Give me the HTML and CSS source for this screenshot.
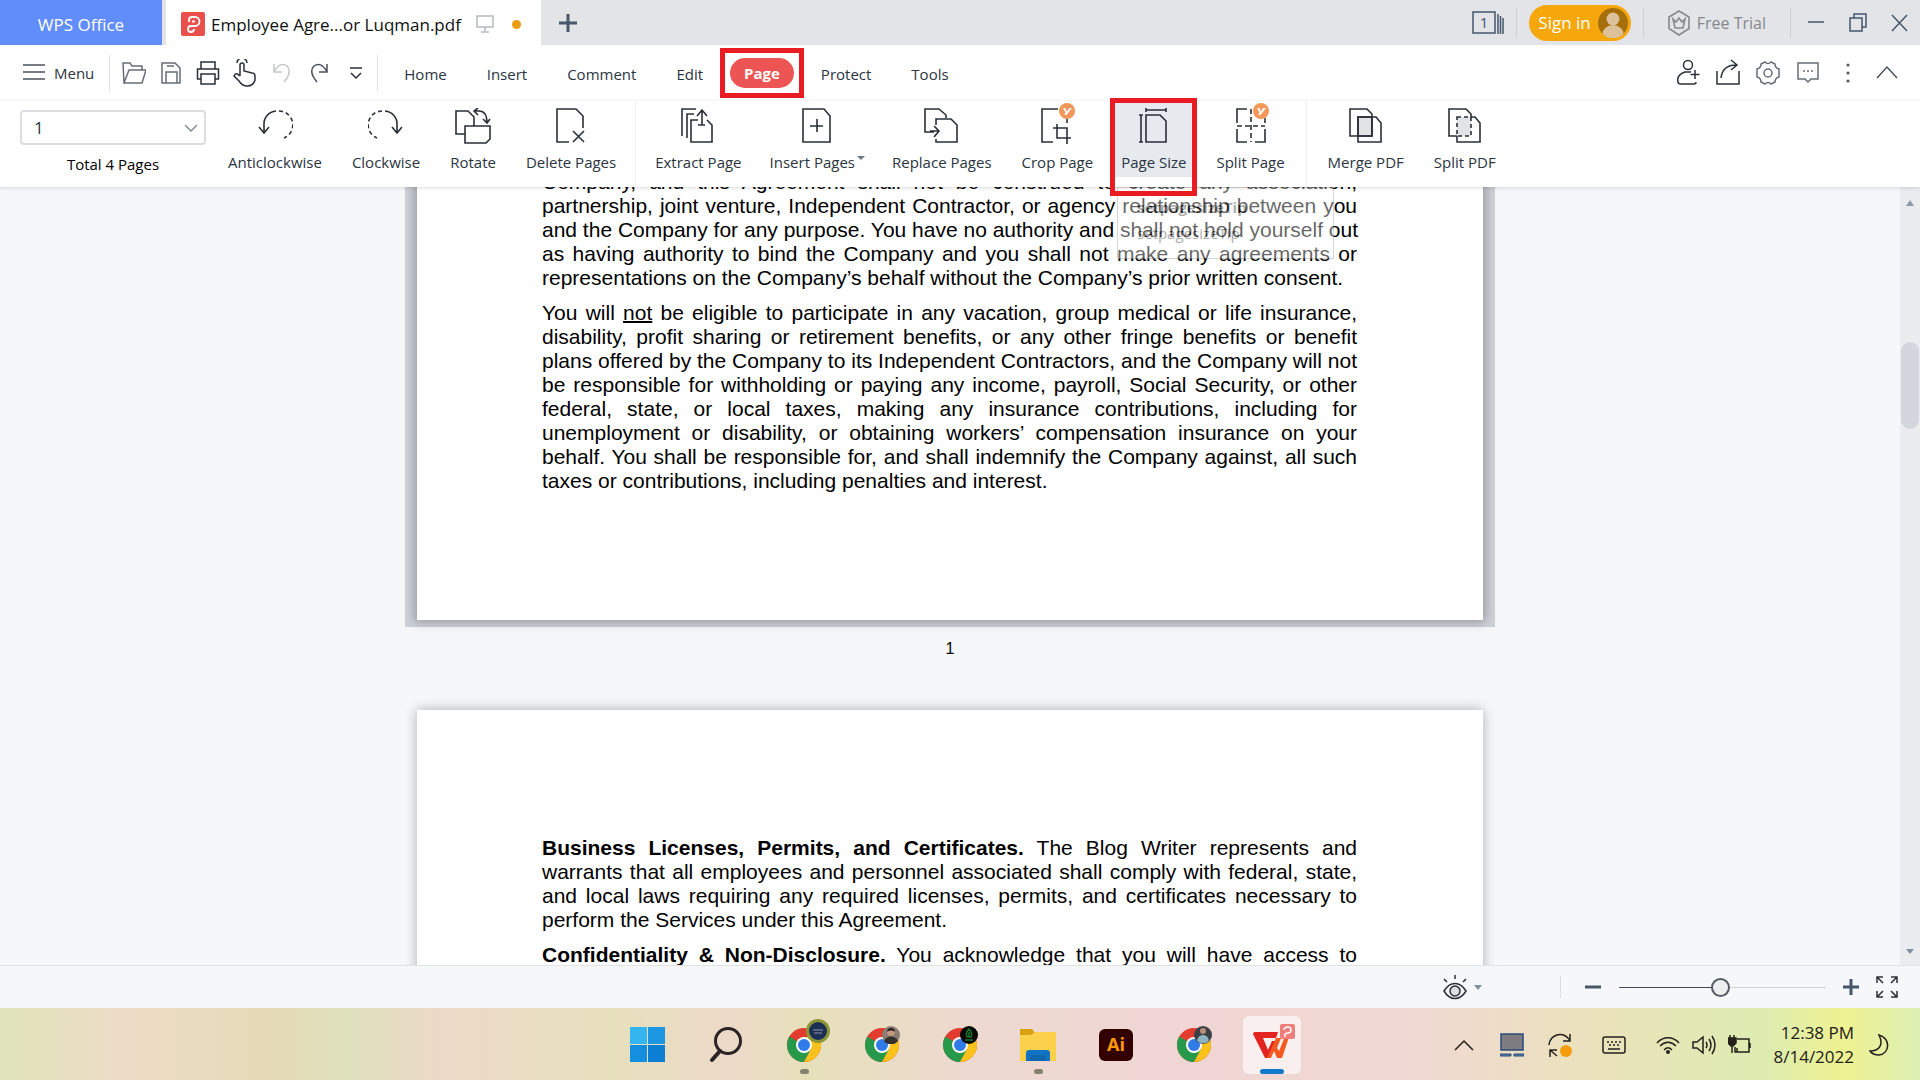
FILE: index.html
```
<!DOCTYPE html>
<html lang="en">
<head>
  <meta charset="UTF-8">
  <title>Employee Agre...or Luqman.pdf</title>
  <link rel="stylesheet" href="styles.css">
</head>
<body>
  <!-- shared icon shapes -->
  <svg class="defs" width="0" height="0" aria-hidden="true">
    <symbol id="chrome" viewBox="0 0 34 34">
      <circle cx="17" cy="17" r="17" fill="#e33b2e"/>
      <path d="M17 17 2.3 8.5A17 17 0 0 0 17 34l7.4-12.8Z" fill="#27994a"/>
      <path d="M17 9h15A17 17 0 0 1 17 34l7-13Z" fill="#fcc21b"/>
      <circle cx="17" cy="17" r="8" fill="#fff"/>
      <circle cx="17" cy="17" r="6" fill="#2f7be8"/>
    </symbol>
    <symbol id="vip" viewBox="0 0 16 16">
      <circle cx="8" cy="8" r="8" fill="#f2965a"/>
      <path d="M4 5h2.500l1 3.500L10.500 5H13L7.500 12H5.500L6.500 9.500Z" fill="#fff"/>
    </symbol>
  </svg>

  <div class="app">
    <header class="titlebar">
      <button class="tab-home">WPS Office</button>
      <div class="tab-file">
        <svg width="24" height="24" viewBox="0 0 24 24"><rect width="24" height="24" rx="2" fill="#e9504d"/><path d="M8 10V8a3 3 0 0 1 3-3h3a4.500 4.500 0 0 1 0 9h-4a3 3 0 1 0 3 3M11 9.500h3" fill="none" stroke="#fff" stroke-width="1.800"/></svg>
        <span class="tab-name">Employee Agre...or Luqman.pdf</span>
        <svg class="line screen" width="18" height="18" viewBox="0 0 18 18"><path d="M1 1h16v11H1ZM9 12v4M5 17h8"/></svg>
        <span class="unsaved"></span>
      </div>
      <button class="tab-new" aria-label="New tab"><svg width="18" height="18" viewBox="0 0 18 18"><path d="M9 0v18M0 9h18" stroke="#46566b" stroke-width="3"/></svg></button>
      <div class="title-right">
        <button class="tab-count" aria-label="Tabs"><svg width="32" height="24" viewBox="0 0 32 24"><path d="M1 1h22v21H1ZM26 3v20M28.500 5v18M31 7v16" fill="none" stroke="#46566b" stroke-width="1.500"/><text x="12" y="17" text-anchor="middle" class="count-text">1</text></svg></button>
        <span class="sep"></span>
        <button class="sign-in">Sign in
          <svg width="30" height="30" viewBox="0 0 30 30"><circle cx="15" cy="15" r="15" fill="#a66f0b"/><circle cx="15" cy="11" r="6.500" fill="#dcc19a"/><path d="M4.500 26a10.500 9 0 0 1 21 0A15 15 0 0 1 4.500 26Z" fill="#dcc19a"/></svg>
        </button>
        <span class="sep"></span>
        <button class="trial"><svg width="22" height="26" viewBox="0 0 22 26"><path d="M11 1 21 7v11.500L11 25 1 18.500V7ZM5 9l3 3 3-4 3 4 3-3-2 9H7Z" fill="none" stroke="#85888d" stroke-width="1.600"/></svg>Free Trial</button>
        <span class="sep"></span>
        <div class="window-buttons">
          <button aria-label="Minimize"><svg width="20" height="20" viewBox="0 0 20 20"><path d="M2 9h16"/></svg></button>
          <button aria-label="Restore"><svg width="20" height="20" viewBox="0 0 20 20"><path d="M6 5V1h12v13h-4M2 5h12v13H2Z"/></svg></button>
          <button aria-label="Close"><svg width="20" height="20" viewBox="0 0 20 20"><path d="m2 2 15 16M17 2 2 18"/></svg></button>
        </div>
      </div>
    </header>

    <div class="menubar">
      <button class="menu-button"><svg class="line" width="22" height="18" viewBox="0 0 22 18"><path d="M0 1h22M0 8h22M0 15h22"/></svg>Menu</button>
      <div class="quick">
        <button aria-label="Open"><svg class="line soft" width="24" height="24" viewBox="0 0 24 24"><path d="M2 22 1 2h7l2 3h10v4M2 22 7 9h17l-4 13Z"/></svg></button>
        <button aria-label="Save"><svg class="line soft" width="24" height="24" viewBox="0 0 24 24"><path d="M3 2h13l5 5v15H3ZM7 22V11h11v11M8 5h7"/></svg></button>
        <button aria-label="Print"><svg class="line dark" width="24" height="24" viewBox="0 0 24 24"><path d="M5 8V1h14v7M5 18H1.500V8h21v10H19M5 13h14v10H5Z"/></svg></button>
        <button aria-label="Hand"><svg class="line dark" width="24" height="28" viewBox="0 0 24 28"><path d="M7 17V6a2 2 0 0 1 4 0v6l8 2c2 0 3 1 3 3v4c-1 4-3 6-8 6-4 0-6-2-8-5l-5-5c1-3 3-3 6 0M4 4a5 5 0 0 1 10 0"/></svg></button>
        <button aria-label="Undo"><svg class="line faded" width="20" height="22" viewBox="0 0 20 22"><path d="M2 2v8h8M2 10C6 2 11 1 15 4c4 4 3 9-3 16"/></svg></button>
        <button aria-label="Redo"><svg class="line" width="20" height="22" viewBox="0 0 20 22"><path d="M18 2v8h-8M18 10C14 2 9 1 5 4c-4 4-3 9 3 16"/></svg></button>
        <button aria-label="More"><svg class="line dark" width="12" height="14" viewBox="0 0 12 14"><path d="M0 2h12M1 7l5 5 5-5"/></svg></button>
      </div>
      <nav class="tabs">
        <a href="#">Home</a>
        <a href="#">Insert</a>
        <a href="#">Comment</a>
        <a href="#">Edit</a>
        <a href="#" class="active marked">Page</a>
        <a href="#">Protect</a>
        <a href="#">Tools</a>
      </nav>
      <div class="menu-right">
        <button aria-label="Add user"><svg class="line dark" width="24" height="28" viewBox="0 0 24 28"><circle cx="12" cy="6" r="4.500"/><path d="M15 13H9c-6 2-8 6-7 10q0 2 3 2h13q2 0 2-2M19 11v9M14.500 15.500h9"/></svg></button>
        <button aria-label="Share"><svg class="line dark" width="24" height="28" viewBox="0 0 24 28"><path d="M1 12v13h22V12M5 19C6 11 11 6 20 6M15 1l6 5-6 5"/></svg></button>
        <button aria-label="Settings"><svg class="line soft" width="24" height="28" viewBox="0 0 24 28"><path d="M9 3q3 3 6 0l4 2q0 4 4 5v8q-4 1-4 5l-4 2q-3-3-6 0l-4-2q0-4-4-5v-8q4-1 4-5Z"/><circle cx="12" cy="14" r="4"/></svg></button>
        <button aria-label="Feedback"><svg class="line soft" width="24" height="28" viewBox="0 0 24 28"><path d="M2 4h20v16h-7l-3 3-3-3H2ZM7 12h2M11 12h2M15 12h2"/></svg></button>
        <button aria-label="Options"><svg width="24" height="28" viewBox="0 0 24 28" fill="#555c66"><circle cx="12" cy="6" r="1.600"/><circle cx="12" cy="14" r="1.600"/><circle cx="12" cy="22" r="1.600"/></svg></button>
        <button aria-label="Collapse"><svg class="line" width="24" height="28" viewBox="0 0 24 28"><path d="m1 19 10-11 10 11"/></svg></button>
      </div>
    </div>

    <div class="ribbon">
      <div class="page-pick">
        <select id="page"><option>1</option></select>
        <label for="page">Total 4 Pages</label>
      </div>
      <button class="tool"><svg width="36" height="36" viewBox="0 0 36 36"><path d="M7 25V17A13 13 0 0 1 19 3M2 19l5 6 5-6"/><path d="M22 3A14 14 0 0 1 27 30" stroke-dasharray="4 3"/></svg>Anticlockwise</button>
      <button class="tool"><svg width="36" height="36" viewBox="0 0 36 36"><path d="M29 25V17A13 13 0 0 0 17 3M24 19l5 6 5-6"/><path d="M14 3A14 14 0 0 0 9 30" stroke-dasharray="4 3"/></svg>Clockwise</button>
      <button class="tool"><svg width="36" height="36" viewBox="0 0 36 36"><path d="M10 26H1V3h12l6 6v9M10 18h25v13l-4 4H10ZM20 3h4c6 0 8 5 8 12M23 0l-4 3 4 4M28 11l4 4 3-4"/></svg>Rotate</button>
      <button class="tool"><svg width="36" height="36" viewBox="0 0 36 36"><path d="M16 34H4V1h19l7 7v12M20 23l11 11M31 23 20 34"/></svg>Delete Pages</button>
      <span class="ribbon-sep"></span>
      <button class="tool"><svg width="36" height="36" viewBox="0 0 36 36"><path d="M2 28V1h14M7 30V6h7M18 12h-7v22h21V17l-5-5M22 17V2M17 8l5-6 5 6M18 17h7"/></svg>Extract Page</button>
      <button class="tool has-caret"><svg width="36" height="36" viewBox="0 0 36 36"><path d="M4 1h21l6 7v26H4ZM18 11v13M11 18h13"/></svg>Insert Pages</button>
      <button class="tool"><svg width="36" height="36" viewBox="0 0 36 36"><path d="M10 24H1V1h14l7 6v3M12 17v-6h15l6 6v17H12v-3M6 23h8M10 18l5 5-5 6"/></svg>Replace Pages</button>
      <button class="tool"><svg width="36" height="36" viewBox="0 0 36 36"><path d="M14 34H3V1h16M28 15v-5M18 16v14h14M14 20h14v16M28 20v13"/></svg><svg class="vip"><use href="#vip"/></svg>Crop Page</button>
      <button class="tool current marked"><svg width="36" height="36" viewBox="0 0 36 36"><path d="M10 7h14l6 6v21H10ZM10 2h20M10 0v4M30 0v4M5 7v27M3 7h4M3 34h4"/></svg>Page Size</button>
      <button class="tool"><svg width="36" height="36" viewBox="0 0 36 36"><path d="M14 1H4v14M4 21v13h10M22 34h10V21M32 15v-5"/><path d="M18 1v33M4 18h28" stroke-dasharray="5 3"/></svg><svg class="vip"><use href="#vip"/></svg>Split Page</button>
      <span class="ribbon-sep"></span>
      <button class="tool"><svg width="36" height="36" viewBox="0 0 36 36"><path d="M10 9h14v19H10Z" fill="#e2e3e5"/><path d="M2 1h17l5 5v22H2ZM24 9h4l5 6v19H10V9h14"/></svg>Merge PDF</button>
      <button class="tool"><svg width="36" height="36" viewBox="0 0 36 36"><path d="M10 9h14v19H10Z" fill="#e2e3e5" stroke-dasharray="4 3"/><path d="M10 28H2V1h17l5 5v3h4l5 6v19H10v-6"/></svg>Split PDF</button>
    </div>

    <main class="viewer">
      <div class="tooltip"><strong>setpagesizeTip</strong><span>setpagesizeTip</span></div>
      <div class="pages">
        <section class="page selected">
          <p>Company, and this Agreement shall not be construed to create any association, partnership, joint venture, Independent Contractor, or agency relationship between you <span class="keep">and the Company for any purpose. You have no authority and shall not hold yourself out</span> as having authority to bind the Company and you shall not make any agreements or representations on the Company’s behalf without the Company’s prior written consent.</p>
          <p>You will <u>not</u> be eligible to participate in any vacation, group medical or life insurance, disability, profit sharing or retirement benefits, or any other fringe benefits or benefit plans offered by the Company to its Independent Contractors, and the Company will not be responsible for withholding or paying any income, payroll, Social Security, or other federal, state, or local taxes, making any insurance contributions, including for unemployment or disability, or obtaining workers’ compensation insurance on your behalf. You shall be responsible for, and shall indemnify the Company against, all such taxes or contributions, including penalties and interest.</p>
        </section>
        <div class="page-number">1</div>
        <section class="page">
          <p><b>Business Licenses, Permits, and Certificates.</b> The Blog Writer represents and warrants that all employees and personnel associated shall comply with federal, state, and local laws requiring any required licenses, permits, and certificates necessary to perform the Services under this Agreement.</p>
          <p class="cut"><b>Confidentiality &amp; Non-Disclosure.</b> You acknowledge that you will have access to</p>
        </section>
      </div>
      <div class="scrollbar"><i class="up"></i><i class="thumb"></i><i class="down"></i></div>
    </main>

    <footer class="status">
      <button class="view-mode" aria-label="Eye protection"><svg class="line dark" width="24" height="26" viewBox="0 0 24 26"><path d="M1 17C7 7 17 7 23 17 17 27 7 27 1 17ZM12 1v4M1 5l3 3M23 5l-3 3"/><circle cx="12" cy="17" r="5" fill="#dcdee1"/></svg><i class="caret"></i></button>
      <span class="status-sep"></span>
      <button aria-label="Zoom out"><svg width="16" height="16" viewBox="0 0 16 16"><path d="M0 8h16" stroke="#46566b" stroke-width="3"/></svg></button>
      <input class="zoom" type="range" min="0" max="100" value="49" aria-label="Zoom">
      <button aria-label="Zoom in"><svg width="16" height="16" viewBox="0 0 16 16"><path d="M0 8h16M8 0v16" stroke="#46566b" stroke-width="3"/></svg></button>
      <button aria-label="Full screen"><svg class="line dark" width="22" height="22" viewBox="0 0 22 22"><path d="M1 7V1h6M1 1l6 6M15 1h6v6M21 1l-6 6M1 15v6h6M1 21l6-6M21 15v6h-6M21 21l-6-6"/></svg></button>
    </footer>
  </div>

  <div class="taskbar">
    <div class="apps">
      <button aria-label="Start"><svg width="36" height="36" viewBox="0 0 36 36"><path d="M0 0h17v17H0Z" fill="#35b5f0"/><path d="M18 0h17v17H18Z" fill="#1d97e4"/><path d="M0 18h17v17H0Z" fill="#148fdf"/><path d="M18 18h17v17H18Z" fill="#0c7fd4"/></svg></button>
      <button aria-label="Search"><svg width="36" height="36" viewBox="0 0 36 36" fill="none" stroke="#2a2426"><circle cx="20" cy="14" r="12.500" stroke-width="3"/><path d="m12 24-8 9" stroke-width="4" stroke-linecap="round"/></svg></button>
      <button class="running" aria-label="Chrome"><svg width="34" height="34"><use href="#chrome"/></svg><svg class="badge big" viewBox="0 0 24 24"><circle cx="12" cy="12" r="12" fill="#8d9637"/><circle cx="12" cy="12" r="9" fill="#1c2f55"/><path d="M7 11h10M8 14h8" stroke="#6c7486" stroke-width="1.500"/></svg></button>
      <button aria-label="Chrome"><svg width="34" height="34"><use href="#chrome"/></svg><svg class="badge" viewBox="0 0 18 18"><circle cx="9" cy="9" r="9" fill="#8b7d71"/><circle cx="9" cy="6" r="4" fill="#c49a80"/><path d="M5 6a4 4 0 0 1 8 0c-2-2-6-2-8 0" fill="#231e1e"/><path d="M2 15c2-6 12-6 14 0a9 9 0 0 1-14 0Z" fill="#33302f"/></svg></button>
      <button aria-label="Chrome"><svg width="34" height="34"><use href="#chrome"/></svg><svg class="badge" viewBox="0 0 18 18"><circle cx="9" cy="9" r="9" fill="#050805"/><path d="M9 3Q5 7 7 11h4Q13 7 9 3ZM5 14h8M9 6v5" fill="none" stroke="#18772b" stroke-width="1.500"/></svg></button>
      <button class="running" aria-label="File Explorer"><svg width="36" height="34" viewBox="0 0 36 34"><path d="M0 1h12l3 4v3H0Z" fill="#d9a012"/><path d="M0 7h11l4-3h21v29H0Z" fill="#fdd04c"/><path d="M6 33V25q0-3 3-3h18q3 0 3 3v8Z" fill="#1273c4"/><path d="M10 27h16v6H10Z" fill="#1167ae"/></svg></button>
      <button aria-label="Illustrator"><svg width="34" height="34" viewBox="0 0 34 34"><rect y="1" width="34" height="32" rx="6" fill="#330000"/><text x="17" y="23" text-anchor="middle" class="ai-text">Ai</text></svg></button>
      <button aria-label="Chrome"><svg width="34" height="34"><use href="#chrome"/></svg><svg class="badge" viewBox="0 0 18 18"><circle cx="9" cy="9" r="9" fill="#3a3f48"/><circle cx="9" cy="5" r="3" fill="#b98f78"/><path d="M3 15c1-8 11-8 12 0a9 9 0 0 1-12 0Z" fill="#8bb3c0"/></svg></button>
      <button class="focused" aria-label="WPS Office"><svg width="38" height="30" viewBox="0 0 38 30"><path d="M2 2h23l-2 6H10l5 12 4-9h5L17 28h-5L0 4Q0 2 2 2Z" fill="#e2231f"/><path d="M14 28 23 8h5l-4 10 2 3 7-17h4L29 28h-5l-3-7-3 7Z" fill="#f4591f"/></svg><svg class="badge" viewBox="0 0 18 18"><rect x="2" y="1" width="15" height="15" rx="2" fill="#ee7d7c"/><path d="M6 7q0-3 4-3a3 3 0 0 1 0 6q-4 0-3 4" fill="none" stroke="#fff" stroke-width="1.500"/></svg></button>
    </div>
    <div class="tray">
      <svg width="24" height="24" viewBox="0 0 24 24"><path d="m3 17 9-9 9 9"/></svg>
      <svg width="24" height="24" viewBox="0 0 24 24"><path d="M1 1h22v16H1Z" fill="#7d7d7f" stroke="#274a7c"/><path d="M0 21h11v2H0ZM14 21h10v2H14Z" fill="#5d83ad" stroke="#274a7c" stroke-width="1"/></svg>
      <svg class="gap-wide" width="24" height="24" viewBox="0 0 24 24"><path d="M1 12A11 11 0 0 1 22 8M22 1v7h-7M9 23 2 17M2 24v-7h7"/><circle cx="18" cy="18" r="6" fill="#f59c0c" stroke="none"/></svg>
      <svg class="gap-wide" width="24" height="24" viewBox="0 0 24 24"><rect x="1" y="4" width="22" height="16" rx="2"/><path d="M5 9h2M9 9h2M13 9h2M17 9h2M7 12h2M11 12h2M15 12h2M6 16h12"/></svg>
      <svg class="gap-small" width="24" height="24" viewBox="0 0 24 24"><path d="M1 10c6-7 16-7 22 0M4 13c5-5 11-5 16 0M8 17c3-3 5-3 8 0"/><circle cx="12" cy="19" r="2" fill="#25201c" stroke="none"/></svg>
      <svg class="gap-small" width="24" height="24" viewBox="0 0 24 24"><path d="M1 9h4l6-5v16l-6-5H1ZM14 9q2 3 0 6M17 6q4 6 0 12M20 3q6 9 0 18"/></svg>
      <svg width="24" height="24" viewBox="0 0 24 24"><path d="M9 6h12v13H7v-5M22 10v5"/><path d="M0 5h8v5L5 13H3L0 10ZM2 2v3M6 2v3M4 13v7M9 15v4" fill="#25201c"/></svg>
      <time class="clock">12:38 PM<br>8/14/2022</time>
      <svg width="20" height="22" viewBox="0 0 20 22"><path d="M10 1c12 3 11 19 0 20-4 0-7-1-9-4 9 0 14-6 9-16Z"/></svg>
    </div>
  </div>
</body>
</html>
```

FILE: styles.css
```
* {
  box-sizing: border-box;
}
body {
  margin: 0;
  height: 100vh;
  display: flex;
  flex-direction: column;
  overflow: hidden;
  font-family: "Open Sans", "Noto Sans", sans-serif;
  font-size: 15px;
  color: #2b3440;
  background: #f6f7f9;
}
button {
  display: flex;
  align-items: center;
  justify-content: center;
  padding: 0;
  border: none;
  background: none;
  font: inherit;
  color: inherit;
  cursor: pointer;
}
svg {
  display: block;
  flex: none;
}
.defs {
  position: absolute;
}
.line {
  fill: none;
  stroke: #4b525c;
  stroke-width: 1.5;
}
.line.dark {
  stroke: #2b3038;
}
.line.soft {
  stroke: #676d77;
}
.line.faded {
  stroke: #c3c5c9;
}
.app {
  flex: 1;
  min-height: 0;
  display: flex;
  flex-direction: column;
}

/* title bar */
.titlebar {
  display: flex;
  height: 45px;
  background: #e2e4e8;
}
.tab-home {
  width: 162px;
  padding-top: 3px;
  margin-right: 4px;
  background: #618dfb;
  color: #fff;
  font-size: 17px;
}
.tab-file {
  display: flex;
  align-items: center;
  width: 375px;
  padding: 3px 20px 0 15px;
  background: #fff;
  color: #111;
  font-size: 17px;
}
.tab-name {
  flex: 1;
  margin-left: 6px;
  white-space: nowrap;
}
.line.screen {
  stroke: #b5b9bf;
}
.unsaved {
  width: 9px;
  height: 9px;
  margin-left: 18px;
  border-radius: 50%;
  background: #eb9c12;
}
.tab-new {
  width: 53px;
}
.title-right {
  display: flex;
  align-items: center;
  margin-left: auto;
  padding-right: 10px;
}
.sep {
  width: 1px;
  height: 30px;
  margin: 0 12px;
  background: #cdcfd4;
}
.count-text {
  font-size: 15px;
  fill: #46566b;
}
.sign-in {
  gap: 7px;
  height: 36px;
  padding: 0 3px 0 9px;
  border-radius: 18px;
  background: #f6a70c;
  color: #fff;
  font-size: 17px;
}
.trial {
  gap: 7px;
  margin: 0 12px;
  color: #85888d;
  font-size: 16px;
}
.window-buttons {
  display: flex;
  gap: 22px;
  margin-left: 3px;
  fill: none;
  stroke: #46566b;
  stroke-width: 1.5;
}

/* menu row */
.menubar {
  display: flex;
  align-items: center;
  height: 56px;
  background: #fff;
}
.menu-button {
  gap: 9px;
  height: 36px;
  padding: 0 15px 0 23px;
  border-right: 1px solid #dddfe3;
}
.quick {
  display: flex;
  align-items: center;
  gap: 13px;
  height: 36px;
  padding: 0 9px 0 12px;
  border-right: 1px solid #dddfe3;
}
.quick button {
  width: 24px;
}
.tabs {
  display: flex;
  align-items: center;
  margin-left: 6px;
}
.tabs a {
  padding: 5px 20px 3px;
  line-height: 22px;
  color: #2b3440;
  text-decoration: none;
}
.tabs .active {
  position: relative;
  margin: 0 7px;
  padding: 4px 14px;
  border-radius: 15px;
  background: #ec5553;
  color: #fff;
  font-weight: 700;
}
.marked::after {
  content: "";
  position: absolute;
  inset: -10px;
  border: 5px solid #e91c24;
  z-index: 5;
}
.menu-right {
  display: flex;
  gap: 16px;
  margin-left: auto;
  padding-right: 20px;
}

/* ribbon */
.ribbon {
  position: relative;
  z-index: 2;
  display: flex;
  height: 86px;
  background: #fff;
  box-shadow: 0 1px 4px rgba(0, 0, 0, 0.14);
}
.page-pick {
  display: flex;
  flex-direction: column;
  align-items: center;
  gap: 9px;
  width: 186px;
  margin: 9px 7px 0 20px;
  color: #000;
}
.page-pick select {
  width: 100%;
  height: 35px;
  padding: 0 12px;
  border: 2px solid #dcdde2;
  border-radius: 4px;
  appearance: none;
  background: #fff url("data:image/svg+xml,%3Csvg xmlns='http://www.w3.org/2000/svg' width='12' height='8'%3E%3Cpath d='m0 1 6 6 6-6' fill='none' stroke='%23838a93' stroke-width='1.500'/%3E%3C/svg%3E") no-repeat right 7px center;
  font: inherit;
  font-size: 17px;
  color: #2b3440;
}
.tool {
  position: relative;
  flex-direction: column;
  justify-content: flex-start;
  gap: 7px;
  height: 76px;
  padding: 7px 15px 0;
  line-height: 22px;
  white-space: nowrap;
}
.tool > svg {
  fill: none;
  stroke: #2b2f38;
  stroke-width: 1.6;
}
.tool .vip {
  position: absolute;
  top: 2px;
  left: 50%;
  width: 16px;
  height: 16px;
  margin-left: 2px;
  stroke: none;
}
.tool.current {
  padding: 7px 6px 0;
  margin: 0 9px 0 7px;
  background: #e6e9ee;
}
.tool.current::after {
  inset: -3px -5px -19px;
}
.tool.has-caret {
  padding-left: 13px;
  padding-right: 22px;
}
.has-caret > svg {
  margin-left: 10px;
}
.has-caret::after {
  content: "";
  position: absolute;
  right: 12px;
  bottom: 17px;
  border: 4px solid transparent;
  border-top-color: #6b7684;
  border-bottom: none;
}
.ribbon-sep {
  width: 1px;
  margin: 0 6px;
  background: #f0f1f3;
}
.ribbon-sep:first-of-type {
  margin: 0 4px;
}

/* document */
.viewer {
  position: relative;
  flex: 1;
  min-height: 0;
  display: flex;
}
.pages {
  flex: 1;
  overflow: hidden;
  display: flex;
  flex-direction: column;
  align-items: center;
}
.page {
  flex: none;
  width: 1066px;
  padding: 126px 126px 127px 125px;
  background: #fff;
  box-shadow: 0 0 12px rgba(0, 0, 0, 0.3);
  font: 21px/24px "Liberation Sans", Arial, sans-serif;
  color: #000;
  text-align: justify;
}
.page.selected {
  margin-top: -17px;
  padding-top: 0;
  box-shadow: 0 0 10px 2px rgba(90, 95, 100, 0.5), 0 -5px 0 12px #ced1d8;
}
.page p {
  margin: 0 0 11px;
}
.page p:last-child {
  margin-bottom: 0;
}
.page u {
  text-decoration-thickness: 2px;
}
.page .keep {
  white-space: nowrap;
}
.page .cut {
  text-align-last: justify;
}
.page-number {
  flex: none;
  padding: 17px 0 49px;
  font: 16px/24px "Liberation Sans", Arial, sans-serif;
  color: #000;
}
.tooltip {
  position: absolute;
  top: 0;
  left: 1117px;
  display: flex;
  flex-direction: column;
  gap: 4px;
  width: 217px;
  padding: 8px 19px 14px;
  border: 1px solid #999;
  background: #fff;
  color: #333;
  line-height: 22px;
  opacity: 0.4;
}
.scrollbar {
  display: flex;
  flex-direction: column;
  align-items: center;
  width: 20px;
  padding: 13px 0 11px;
  background: #eaecf0;
}
.up,
.down,
.caret {
  border: 4px solid transparent;
}
.up {
  border-bottom: 6px solid #8b9bab;
  border-top: none;
}
.down,
.caret {
  border-top: 5px solid #8191a3;
  border-bottom: none;
}
.thumb {
  width: 18px;
  height: 87px;
  margin: 136px 0 auto;
  border-radius: 9px;
  background: #d3d6dc;
}

/* status bar */
.status {
  display: flex;
  align-items: center;
  justify-content: flex-end;
  height: 43px;
  padding-right: 22px;
  border-top: 1px solid #e0e2e6;
  background: #f5f7f9;
}
.view-mode {
  gap: 7px;
}
.status-sep {
  width: 1px;
  height: 22px;
  margin: 0 24px 0 78px;
  background: #dcdee2;
}
.zoom {
  appearance: none;
  width: 207px;
  height: 20px;
  margin: 0 17px 0 18px;
  background: linear-gradient(to right, #444b55 49%, #d0d2d6 49%) no-repeat center / 100% 1px;
}
.zoom::-webkit-slider-thumb {
  appearance: none;
  width: 19px;
  height: 19px;
  border: 2px solid #555b64;
  border-radius: 50%;
  background: #eceef0;
}
.status button:last-child {
  margin-left: 17px;
}

/* taskbar */
.taskbar {
  display: grid;
  grid-template-columns: 1fr auto 1fr;
  align-items: center;
  height: 72px;
  padding-top: 2px;
  background: linear-gradient(to right, #dfe3b8 0, #ecdcc6 6%, #e6dab8 14%, #dfe0bc 18%, #ecd9c8 23%, #e6dfbc 32%, #ecd9c8 38%, #e6e0ba 42%, #edd9cf 50%, #efd6d4 60%, #f0d8d4 73%, #ebe2bc 83%, #ddecb0 92%, #eff291 96%, #dcefb4 100%);
  color: #25201c;
}
.apps {
  grid-column: 2;
  display: flex;
  gap: 20px;
}
.apps button {
  position: relative;
  width: 58px;
  height: 58px;
  border-radius: 6px;
}
.apps .focused {
  background: rgba(255, 255, 255, 0.6);
}
.badge {
  position: absolute;
  top: 10px;
  right: 11px;
  width: 18px;
  height: 18px;
}
.badge.big {
  top: 3px;
  right: 3px;
  width: 24px;
  height: 24px;
}
.focused .badge {
  top: 7px;
  right: 5px;
}
.running::after,
.focused::after {
  content: "";
  position: absolute;
  bottom: 0;
  width: 9px;
  height: 5px;
  border-radius: 3px;
  background: #86806f;
}
.focused::after {
  width: 24px;
  background: #1079cc;
}
.ai-text {
  font-size: 18px;
  font-weight: 700;
  fill: #ff9a00;
}
.tray {
  display: flex;
  align-items: center;
  justify-content: flex-end;
  gap: 24px;
  padding-right: 31px;
  fill: none;
  stroke: #25201c;
  stroke-width: 1.5;
}
.gap-wide {
  margin-right: 6px;
}
.gap-small {
  margin-right: -12px;
}
.clock {
  margin-left: -3px;
  font-size: 17px;
  line-height: 24px;
  text-align: right;
}
.tray > :last-child {
  margin-left: -9px;
}
```
